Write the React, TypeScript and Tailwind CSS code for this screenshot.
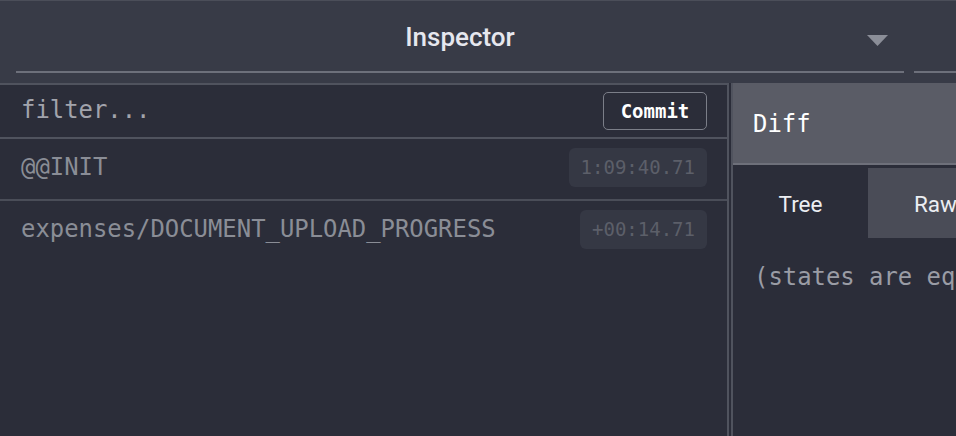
import React from 'react';

const mono = "font-['DejaVu_Sans_Mono','Liberation_Mono',monospace]";
const sans = "font-['Roboto','Noto_Sans',sans-serif]";

interface ActionRowProps {
  name: string;
  time: string;
  last?: boolean;
}

const ActionRow: React.FC<ActionRowProps> = ({ name, time, last }) => (
  <div
    className={`flex items-center justify-between pl-[21px] pr-[20px] pb-[2px] ${
      last ? 'h-[60px]' : 'h-[62px] border-b-2 border-[#4a4d58]'
    }`}
  >
    <span className={`${mono} text-[23.9px] text-[#8a8d96]`}>{name}</span>
    <span
      className={`${mono} text-[19px] text-[#5c5f69] bg-[#353844] rounded-[6px] h-[39px] px-[12px] mb-[2px] flex items-center`}
    >
      {time}
    </span>
  </div>
);

export default function App() {
  return (
    <div className="w-[956px] h-[436px] overflow-hidden bg-[#2b2d39] flex flex-col">
      {/* header */}
      <div className="h-[83px] shrink-0 bg-[#383b47] border-t border-[#4b4e59] flex pl-[16px] gap-[10px] overflow-hidden">
        <div className="relative w-[888px] shrink-0 h-[72px] border-b-2 border-[#6d707b] flex items-center justify-center pt-[3px]">
          <span className={`${sans} font-medium text-[26px] text-[#e6e7ee]`}>Inspector</span>
          <svg
            className="absolute right-[16px] top-[34px]"
            width="21"
            height="11"
            viewBox="0 0 21 11"
          >
            <polygon points="0,0 21,0 10.5,11" fill="#8b8e98" />
          </svg>
        </div>
        <div className="w-[120px] shrink-0 h-[72px] border-b-2 border-[#6d707b]" />
      </div>

      {/* body */}
      <div className="flex flex-1 min-h-0">
        <div className="w-[729px] shrink-0 border-t-2 border-r-2 border-[#50535e] flex flex-col">
          <div className="flex items-center justify-between h-[54px] pl-[21px] pr-[20px] border-b-2 border-[#50535e]">
            <span className={`${mono} text-[23.9px] text-[#a2a4ac]`}>filter...</span>
            <button
              className={`${mono} font-bold text-[19px] text-white h-[38px] w-[104px] border border-[#7b7e88] rounded-[5px] flex items-center justify-center`}
            >
              Commit
            </button>
          </div>
          <ActionRow name="@@INIT" time="1:09:40.71" />
          <ActionRow name="expenses/DOCUMENT_UPLOAD_PROGRESS" time="+00:14.71" last />
        </div>
        <div className="w-[2px] shrink-0" />
        <div className="flex-1 min-w-0 border-l-2 border-[#50535e] flex flex-col">
          <div className="h-[82px] shrink-0 bg-[#5a5c66] border-b-2 border-[#6e707a] flex items-center pl-[20px] pt-[3px]">
            <span className={`${mono} text-[23.9px] text-white`}>Diff</span>
          </div>
          <div className="flex mt-[3px] h-[70px] shrink-0">
            <div
              className={`${sans} w-[135px] shrink-0 flex items-center justify-center pt-[4px] text-[22.5px] text-[#eceef2]`}
            >
              Tree
            </div>
            <div
              className={`${sans} w-[135px] shrink-0 bg-[#4a4c57] flex items-center justify-center pt-[4px] text-[22.5px] text-[#eceef2]`}
            >
              Raw
            </div>
          </div>
          <div className={`${mono} text-[23.9px] text-[#9a9ca5] pl-[21px] pt-[22px] whitespace-nowrap`}>
            (states are equal)
          </div>
        </div>
      </div>
    </div>
  );
}
